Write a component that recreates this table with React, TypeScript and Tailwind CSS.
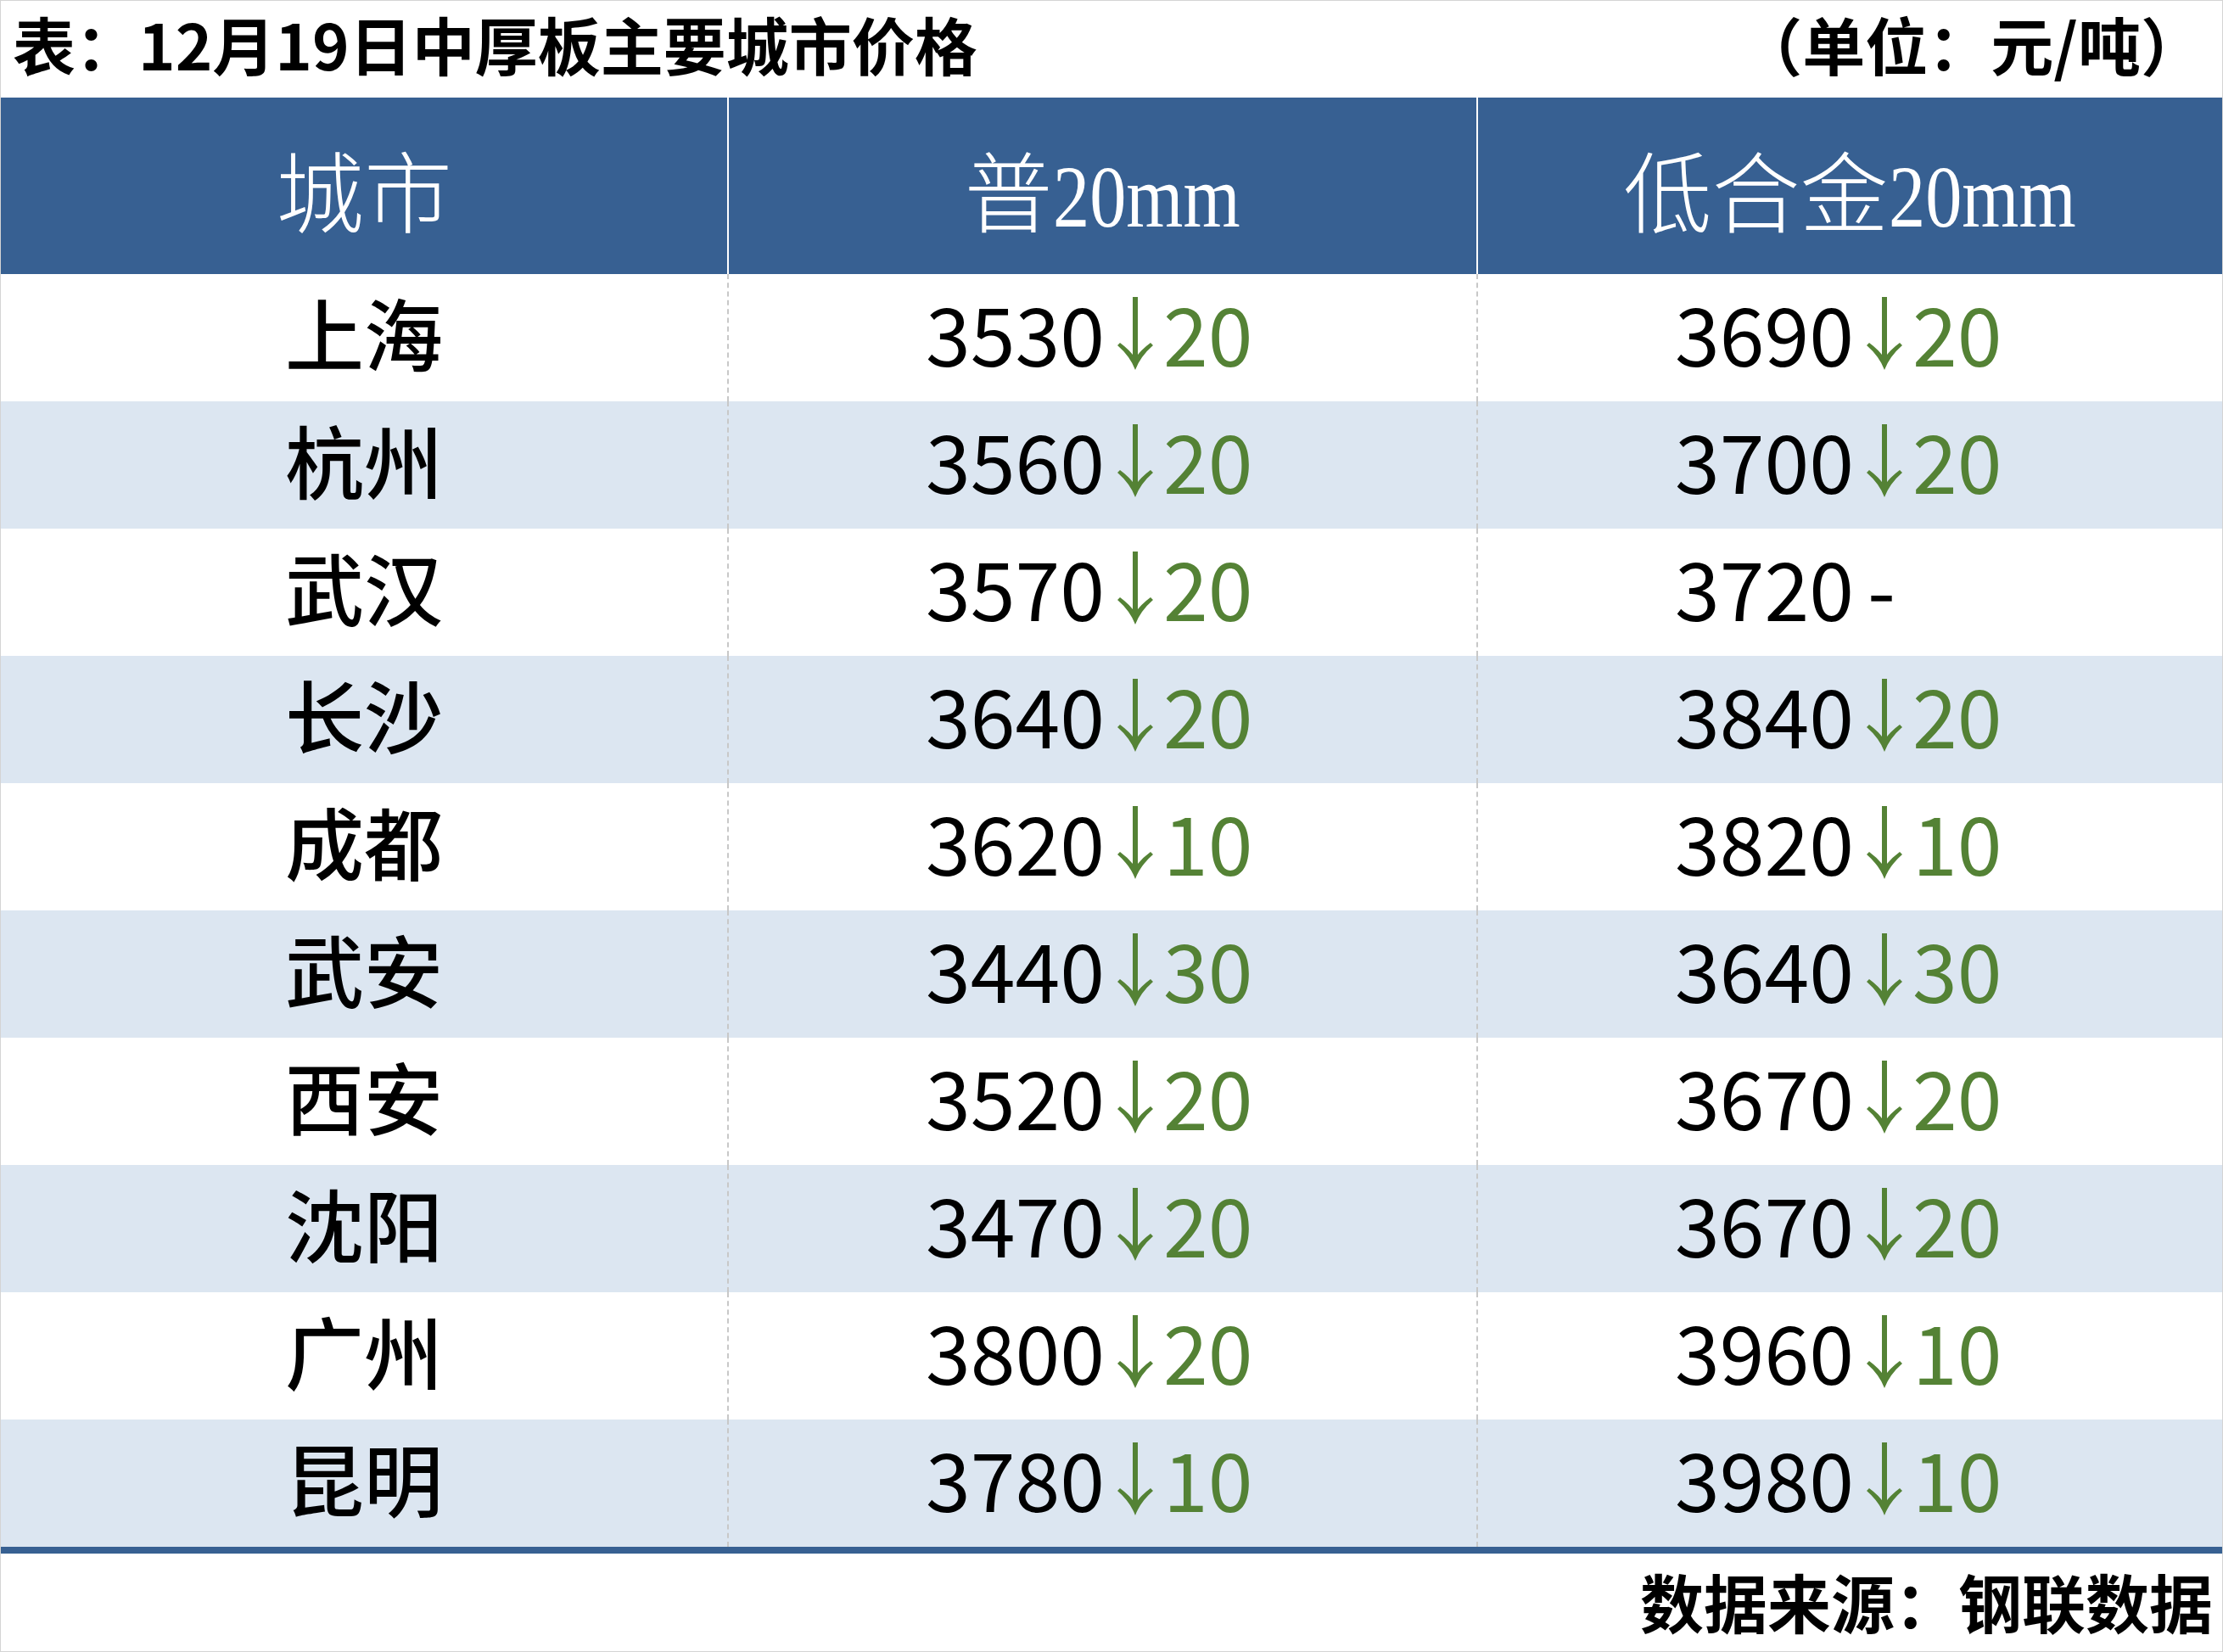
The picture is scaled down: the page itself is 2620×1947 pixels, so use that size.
import React from "react";

type Row = {
  city: string;
  plain: string;
  plainChg: string | null;
  alloy: string;
  alloyChg: string | null;
};

const ROWS: Row[] = [
  { city: "上海", plain: "3530", plainChg: "20", alloy: "3690", alloyChg: "20" },
  { city: "杭州", plain: "3560", plainChg: "20", alloy: "3700", alloyChg: "20" },
  { city: "武汉", plain: "3570", plainChg: "20", alloy: "3720", alloyChg: null },
  { city: "长沙", plain: "3640", plainChg: "20", alloy: "3840", alloyChg: "20" },
  { city: "成都", plain: "3620", plainChg: "10", alloy: "3820", alloyChg: "10" },
  { city: "武安", plain: "3440", plainChg: "30", alloy: "3640", alloyChg: "30" },
  { city: "西安", plain: "3520", plainChg: "20", alloy: "3670", alloyChg: "20" },
  { city: "沈阳", plain: "3470", plainChg: "20", alloy: "3670", alloyChg: "20" },
  { city: "广州", plain: "3800", plainChg: "20", alloy: "3960", alloyChg: "10" },
  { city: "昆明", plain: "3780", plainChg: "10", alloy: "3980", alloyChg: "10" },
];

const SANS = "font-['Noto_Sans_CJK_SC','Noto_Sans',sans-serif]";

function DownArrow() {
  return (
    <svg width="42" height="86" viewBox="0 0 42 86" className="ml-[15px] mr-[12px] shrink-0 translate-y-[3px]">
      <rect x="18" y="0" width="6" height="78" fill="#548235" />
      <path
        d="M21 86 Q15 70 0 57 L3 54 Q14 62 21 72 Q28 62 39 54 L42 57 Q27 70 21 86 Z"
        fill="#548235"
      />
    </svg>
  );
}

function Price({ value, change }: { value: string; change: string | null }) {
  return (
    <div className="flex items-center pb-[16px] pl-[232px] text-[95px] leading-none text-black">
      <span>{value}</span>
      {change ? (
        <>
          <DownArrow />
          <span className="text-[#548235]">{change}</span>
        </>
      ) : (
        <span className="ml-[16px]">-</span>
      )}
    </div>
  );
}

// the header latin is a narrow serif; squeeze Liberation Serif to the same width
function Narrow({ children }: { children: string }) {
  return (
    <span className="inline-block w-[222px] overflow-visible whitespace-nowrap">
      <span className="inline-block origin-left scale-x-[0.83]">{children}</span>
    </span>
  );
}

export default function App() {
  return (
    <div className={`flex h-[1947px] w-[2620px] flex-col border border-[#d4d4d4] bg-white ${SANS}`}>
      {/* title */}
      <div className="flex h-[114px] items-center justify-between pb-[14px] pl-[14px] pr-[22px] text-[74px] font-bold leading-none text-black">
        <span>表：12月19日中厚板主要城市价格</span>
        <span>（单位：元/吨）</span>
      </div>

      {/* header */}
      <div className="grid h-[208px] grid-cols-[856px_883px_1fr] bg-[#376092] font-['Liberation_Serif','Noto_Sans_CJK_SC',serif] text-[104px] font-light leading-none text-white">
        <div className="flex items-center justify-center pt-[26px]">城市</div>
        <div className="flex items-center justify-center border-l-2 border-white pt-[26px]">
          普<Narrow>20mm</Narrow>
        </div>
        <div className="flex items-center justify-center border-l-2 border-white pt-[26px]">
          低合金<Narrow>20mm</Narrow>
        </div>
      </div>

      {/* body */}
      {ROWS.map((r, i) => (
        <div
          key={r.city}
          className={`grid h-[150px] grid-cols-[856px_883px_1fr] ${i % 2 === 1 ? "bg-[#dce6f1]" : "bg-white"}`}
        >
          <div className="flex items-center justify-center pb-[16px] text-[93px] font-medium leading-none text-black">
            {r.city}
          </div>
          <div className="flex items-center border-l-2 border-dashed border-[#c8c8c8]">
            <Price value={r.plain} change={r.plainChg} />
          </div>
          <div className="flex items-center border-l-2 border-dashed border-[#c8c8c8]">
            <Price value={r.alloy} change={r.alloyChg} />
          </div>
        </div>
      ))}

      <div className="h-[8px] bg-[#376092]" />

      {/* footer */}
      <div className="flex flex-1 items-center justify-end pb-[4px] pr-[11px] text-[75px] font-bold leading-none text-black">
        数据来源：钢联数据
      </div>
    </div>
  );
}
